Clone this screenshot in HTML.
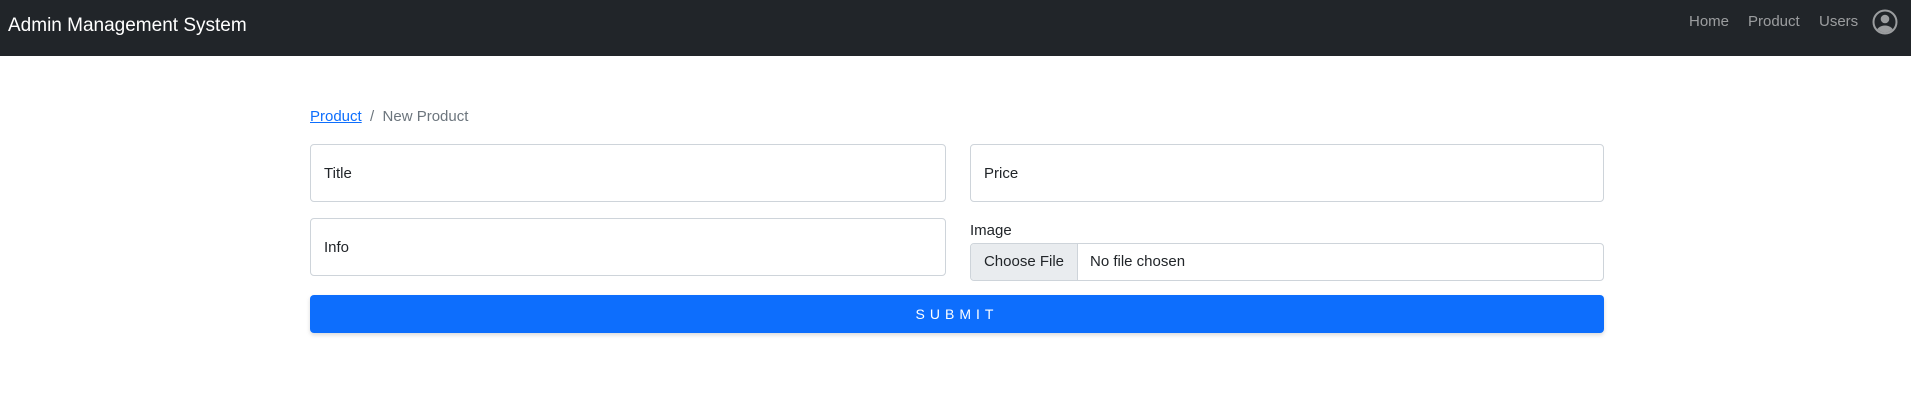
<!DOCTYPE html>
<html><head><meta charset="utf-8"><style>
*{box-sizing:border-box;margin:0;padding:0}
body{width:1911px;height:413px;background:#fff;font-family:"Liberation Sans",sans-serif;color:#212529;position:relative;overflow:hidden}
.nav{position:absolute;left:0;top:0;width:1911px;height:56px;background:#212529}
.brand{position:absolute;left:8px;top:15px;font-size:19px;color:#fff}
.nl{position:absolute;top:13px;font-size:15px;color:rgba(255,255,255,.55)}
.inp{position:absolute;border:1px solid #ced4da;border-radius:4px;background:#fff;font-size:15px}
.inp span{position:absolute;left:13px;top:20px}
.bc{position:absolute;left:310px;top:108px;font-size:15px;color:#6c757d}
.bc a{color:#0d6efd;text-decoration:underline}
.btn{position:absolute;left:310px;top:295px;width:1294px;height:38px;background:#0d6efd;border-radius:4px;color:#fff;font-size:14px;letter-spacing:5px;text-align:center;line-height:38px;box-shadow:0 2px 4px rgba(0,0,0,.15)}
</style></head><body>
<div class="nav">
<div class="brand">Admin Management System</div>
<div class="nl" style="left:1689px">Home</div>
<div class="nl" style="left:1748px">Product</div>
<div class="nl" style="left:1819px">Users</div>
<svg style="position:absolute;left:1872px;top:9px" width="26" height="26" viewBox="0 0 26 26"><defs><clipPath id="c"><circle cx="13" cy="13" r="10.5"/></clipPath></defs><circle cx="13" cy="13" r="11.5" fill="none" stroke="#9b9d9f" stroke-width="2"/><g clip-path="url(#c)" fill="#9b9d9f"><circle cx="13" cy="10" r="4.3"/><ellipse cx="13" cy="23" rx="8.5" ry="6.5"/></g></svg>
</div>
<div class="bc"><a>Product</a>&nbsp; / &nbsp;New Product</div>
<div class="inp" style="left:310px;top:144px;width:636px;height:58px"><span>Title</span></div>
<div class="inp" style="left:970px;top:144px;width:634px;height:58px"><span>Price</span></div>
<div class="inp" style="left:310px;top:218px;width:636px;height:58px"><span>Info</span></div>
<div style="position:absolute;left:970px;top:222px;font-size:15px">Image</div>
<div class="inp" style="left:970px;top:243px;width:634px;height:38px;overflow:hidden">
<div style="position:absolute;left:0;top:0;width:107px;height:36px;background:#e9ecef;border-right:1px solid #ced4da;line-height:36px;text-align:center">Choose File</div>
<div style="position:absolute;left:119px;top:0;line-height:36px">No file chosen</div>
</div>
<div class="btn">SUBMIT</div>
</body></html>
